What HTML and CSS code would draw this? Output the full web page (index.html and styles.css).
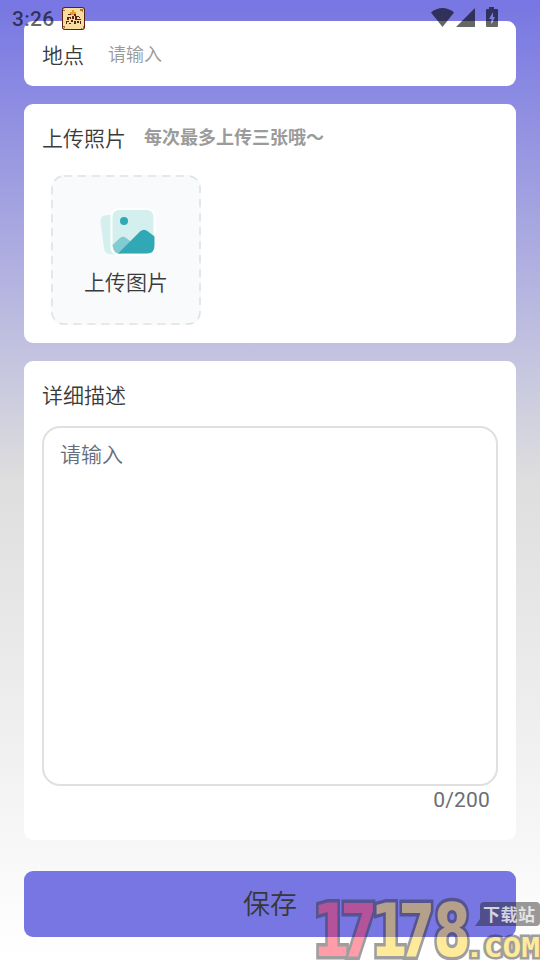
FILE: index.html
```
<!DOCTYPE html>
<html lang="zh-CN">
<head>
<meta charset="utf-8">
<title>上传</title>
<link rel="stylesheet" href="styles.css">
</head>
<body>
<header class="status">
  <span class="clock">3:26</span>
  <svg class="app-icon" width="25" height="25" viewBox="0 0 25 25">
    <rect x="1" y="1" width="23" height="23" rx="3" fill="#592318"/>
    <rect x="2" y="2" width="21" height="21" rx="2" fill="#f8dda0"/>
    <path d="M2 4H4V5H2ZM19 3H22V6H21V5H19ZM2 20H4V22H3V21H2ZM20 22H22V20H23V22H21V23H20Z" fill="#b86b36"/>
    <path d="M9 6H11V4H13V6H15V9H8V8H9Z" fill="#ef9a22"/>
    <path d="M7 8H10V9H7ZM13 8H15V10H13ZM6 11H10V12H8V14H6ZM11 10H13V13H11ZM14 10H18V11H16V13H20V14H14ZM5 15H8V16H6V18H5ZM8 17H10V18H8ZM10 14H12V16H10ZM13 15H15V18H13ZM16 15H18V17H16ZM19 15H20V18H19ZM9 12H10V13H9ZM18 11H19V12H18Z" fill="#592318"/>
  </svg>
  <svg class="signals" width="70" height="22" viewBox="0 0 70 22" fill="#000" fill-opacity=".6">
    <path d="M1 12.500C7.500 6.500 17.500 6.500 24 12.500L12.500 27Z"/>
    <path d="M26 27L45 8V27Z"/>
    <path fill-rule="evenodd" d="M59 7H64V9H67Q68 9 68 10V26Q68 27 67 27H57Q56 27 56 26V10Q56 9 57 9H59ZM63 12L59 19H61.500V24L65 17H63Z"/>
  </svg>
</header>
<main class="page">
  <section class="card place"><label class="label">地点</label><span class="placeholder">请输入</span></section>
  <section class="card photos">
    <div class="heading"><h2 class="label">上传照片</h2><span class="hint">每次最多上传三张哦～</span></div>
    <div class="upload">
      <svg class="frame" width="150" height="150" viewBox="0 0 150 150"><rect x="1" y="1" width="148" height="148" rx="12"/></svg>
      <svg class="picture" width="60" height="52" viewBox="0 0 60 52">
        <path d="M9 7Q1 7 1.500 14L5 40Q6 46.500 13 46.500H17V7Z" fill="#d3efee"/>
        <rect x="11.500" y="0" width="45" height="48" rx="8.500" fill="#fff"/>
        <rect x="13.500" y="2" width="41" height="43.500" rx="6.500" fill="#d3efee"/>
        <circle cx="25" cy="13" r="4" fill="#30a8b5"/>
        <path d="M13.500 37L21 30Q24 27.500 27 30L34 35L23 45.500H19Q15 45.500 13.500 37Z" fill="#83cbd2"/>
        <path d="M19 45.500L41 23.500Q45 20 49 23.500L55.500 28.500V37.500Q55.500 45.500 48 45.500Z" fill="#30a8b5"/>
      </svg>
      <span class="upload-text">上传图片</span>
    </div>
  </section>
  <section class="card detail">
    <h2 class="label">详细描述</h2>
    <div class="textarea">请输入</div>
    <div class="count">0/200</div>
  </section>
  <button class="save">保存</button>
</main>
<svg class="watermark" width="226" height="64" viewBox="314 896 226 64">
  <g class="mark">
    <g class="digits">
      <text class="pink" transform="translate(312.500 956) scale(.74 1)">1</text>
      <text class="pink" transform="translate(340.500 956) scale(.72 1)">7</text>
      <text class="yellow" transform="translate(370.500 956) scale(.74 1)">1</text>
      <text class="yellow" transform="translate(398.500 956) scale(.72 1)">7</text>
      <text class="yellow" transform="translate(433.500 956) scale(.73 1)">8</text>
    </g>
    <text class="domain yellow" x="465" y="956.500" textLength="75" lengthAdjust="spacingAndGlyphs">.COM</text>
    <path d="M484 902H536Q540 902 540 906V922Q540 926 536 926H475L480 919V906Q480 902 484 902Z" fill="#222"/>
  </g>
  <text class="site" x="483" y="920.500" textLength="52">下载站</text>
</svg>
</body>
</html>
```
FILE: styles.css
```
* { box-sizing: border-box; }
body {
  margin: 0;
  height: 960px;
  overflow: hidden;
  position: relative;
  background: linear-gradient(#7776e3 0, #dedede 50%, #fff 100%);
  font-family: Roboto, "Noto Sans CJK SC", sans-serif;
  color: #3a3a3a;
}
.status { position: absolute; inset: 0 0 auto; height: 36px; z-index: 2; }
.clock { position: absolute; left: 12px; top: 6px; font-size: 21px; line-height: 26px; letter-spacing: .3px; font-weight: 500; color: rgba(0,0,0,.6); }
.app-icon { position: absolute; left: 61px; top: 6px; }
.signals { position: absolute; left: 430px; top: 0; overflow: visible; }
.page { padding: 21px 24px 0; display: flex; flex-direction: column; }
.card { background: #fff; border-radius: 9px; padding: 0 18px; }
.label { margin: 0; font-family: "Noto Sans CJK SC", sans-serif; font-size: 21px; line-height: 30px; font-weight: 350; }
.place { height: 65px; display: flex; align-items: center; gap: 24px; }
.placeholder { font-family: "Noto Sans CJK SC", sans-serif; font-size: 18px; line-height: 26px; padding-bottom: 2px; color: #999; font-weight: 350; }
.photos { margin-top: 18px; height: 239px; padding-top: 18px; }
.heading { display: flex; align-items: center; gap: 18px; height: 30px; }
.hint { font-family: "Noto Sans CJK SC", sans-serif; font-size: 18px; line-height: 26px; padding-bottom: 2px; font-weight: 700; color: #9b9b9b; }
.upload { position: relative; width: 150px; height: 150px; margin: 23px 0 0 9px; display: flex; flex-direction: column; align-items: center; padding-top: 33px; background: #f8fafc; border-radius: 13px; }
.frame { position: absolute; inset: 0; }
.frame rect { fill: none; stroke: #dfe2e2; stroke-width: 1.6; stroke-dasharray: 8 6; }
.picture { margin-left: 5px; }
.upload-text { font-size: 21px; line-height: 30px; margin-top: 8px; font-weight: 350; }
.detail { margin-top: 18px; height: 479px; padding-top: 18px; }
.textarea { margin-top: 17px; height: 360px; border: 2px solid #e0e0e0; border-radius: 18px; padding: 10px 16px; font-family: "Noto Sans CJK SC", sans-serif; font-size: 21px; line-height: 30px; font-weight: 350; color: #666d7a; }
.count { text-align: right; padding-right: 8px; font-size: 21px; line-height: 28px; letter-spacing: .2px; color: #6b6e75; }
.save { margin-top: 31px; height: 66px; border: 0; border-radius: 9px; padding: 0 0 3px; background: #7776e3; color: #383838; font: 350 27px "Noto Sans CJK SC", sans-serif; }
.watermark { position: absolute; left: 314px; top: 896px; z-index: 3; }
.mark { opacity: .45; }
.mark text { stroke: #2c2c2c; paint-order: stroke; stroke-linejoin: miter; }
.digits { font: 700 73px "DejaVu Sans", sans-serif; stroke-width: 7; }
.pink { fill: #ff2a43; }
.yellow { fill: #ffd321; }
.site { fill: #fff; fill-opacity: .75; font: 700 17px "Noto Sans CJK SC", sans-serif; }
.domain { font: 700 27px "DejaVu Sans Mono", monospace; stroke-width: 5; }
```
